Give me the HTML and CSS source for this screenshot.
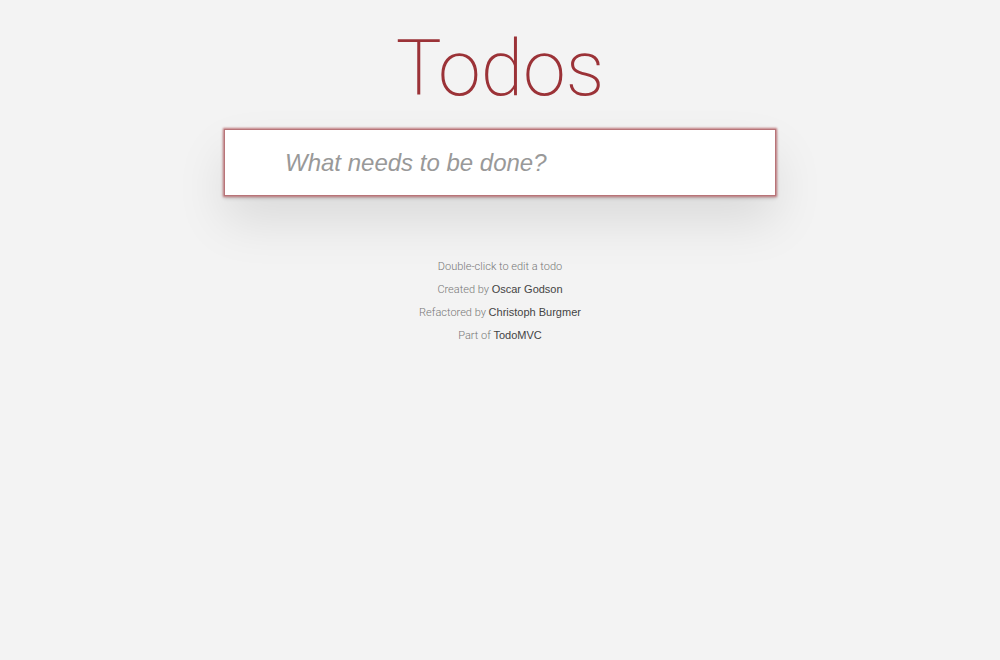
FILE: index.html
```html
<!DOCTYPE html>
<html lang="en">
<head>
<meta charset="utf-8">
<meta name="viewport" content="width=device-width, initial-scale=1">
<title>Todos</title>
<link rel="stylesheet" href="styles.css">
</head>
<body>
<main class="todoapp">
<h1 class="title">Todos</h1>
<input class="new-todo" type="text" placeholder="What needs to be done?" aria-label="What needs to be done?">
</main>
<footer class="info">
<p>Double-click to edit a todo</p>
<p>Created by <a href="#">Oscar Godson</a></p>
<p>Refactored by <a href="#">Christoph Burgmer</a></p>
<p>Part of <a href="#">TodoMVC</a></p>
</footer>
</body>
</html>
```
FILE: styles.css
```css
* { box-sizing: border-box; }
body {
  margin: 0;
  background: #f3f3f3;
  font-family: "Liberation Sans", Arial, sans-serif;
  color: #111;
}
.title {
  margin: 0;
  padding: 22px 0 13px;
  font-family: Roboto, sans-serif;
  font-size: 77px;
  line-height: 94px;
  font-weight: 200;
  text-align: center;
  color: #9b3237;
}
.new-todo {
  display: block;
  width: 100%;
  max-width: 552px;
  margin: 0 auto;
  height: 67px;
  padding: 16px 16px 16px 60px;
  border: 1px solid #b87478;
  background: #fff;
  font-family: inherit;
  font-size: 24px;
  line-height: 32px;
  color: #111;
  outline: none;
  box-shadow: 0 0 2px 1px #c07a7e, 0 2px 4px rgba(0, 0, 0, 0.2), 0 25px 50px rgba(0, 0, 0, 0.1);
}
.new-todo::placeholder {
  font-style: italic;
  color: #999;
  opacity: 1;
}
.info {
  margin-top: 65px;
  font-family: Roboto, sans-serif;
  font-weight: 300;
  font-size: 11px;
  line-height: 12px;
  text-align: center;
  color: #777;
}
.info p { margin: 0 0 10px; }
.info a {
  font-family: "Liberation Sans", Arial, sans-serif;
  font-weight: 400;
  color: #444;
  text-decoration: none;
}
```
